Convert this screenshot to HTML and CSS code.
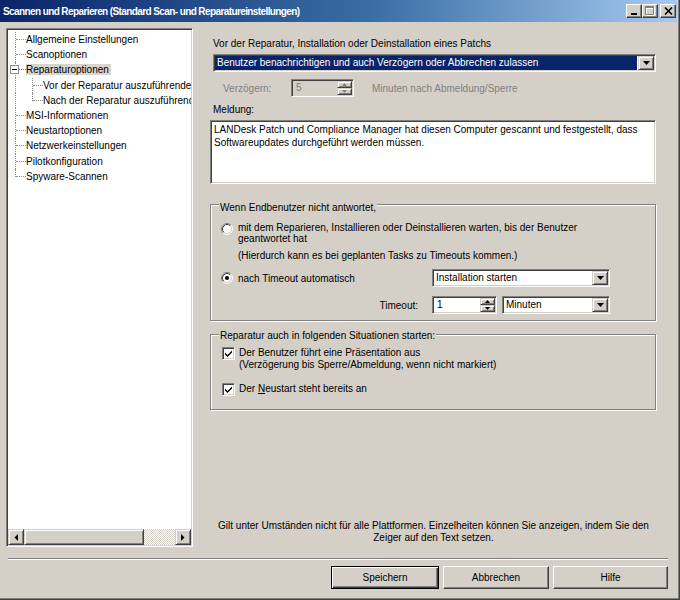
FILE: index.html
```html
<!DOCTYPE html>
<html lang="de">
<head>
    <meta charset="UTF-8">
    <title>Scannen und Reparieren</title>
    <link rel="stylesheet" href="styles.css">
</head>
<body>
    <div class="window">
        <div class="titlebar">
            <span class="title">Scannen und Reparieren (Standard Scan- und Reparatureinstellungen)</span>
            <div class="caption-btns">
                <span class="cap-btn">
                    <svg width="8" height="8" viewBox="0 0 8 8"><rect x="1" y="6" width="6" height="2" fill="#000"/></svg>
                </span>
                <span class="cap-btn">
                    <svg width="10" height="10" viewBox="0 0 10 10">
                        <path d="M1.5 1.5h8v8h-8z M1.5 2.5h8" fill="none" stroke="#fff" stroke-width="1"/>
                        <path d="M0.5 0.5h8v8h-8z M0.5 1.5h8" fill="none" stroke="#808080" stroke-width="1"/>
                    </svg>
                </span>
                <span class="cap-btn close">
                    <svg width="9" height="8" viewBox="0 0 9 8"><path d="M1 0.5l7 7M8 0.5l-7 7" stroke="#000" stroke-width="1.6"/></svg>
                </span>
            </div>
        </div>

        <div class="client">
            <div class="main">
                <div class="tree sunken">
                    <div class="tree-body">
                        <div class="tree-row"><span class="conn"><i class="hline"></i></span><span class="tree-label">Allgemeine Einstellungen</span></div>
                        <div class="tree-row"><span class="conn"><i class="hline"></i></span><span class="tree-label">Scanoptionen</span></div>
                        <div class="tree-row">
                            <span class="conn"><i class="hline"></i><span class="expander"><i class="minus"></i></span></span>
                            <span class="tree-label selected">Reparaturoptionen</span>
                        </div>
                        <div class="tree-row"><span class="indent"></span><span class="conn child"><i class="hline"></i></span><span class="tree-label">Vor der Reparatur auszuführende Befehle</span></div>
                        <div class="tree-row"><span class="indent"></span><span class="conn child last"><i class="hline"></i></span><span class="tree-label">Nach der Reparatur auszuführende Befehle</span></div>
                        <div class="tree-row"><span class="conn"><i class="hline"></i></span><span class="tree-label">MSI-Informationen</span></div>
                        <div class="tree-row"><span class="conn"><i class="hline"></i></span><span class="tree-label">Neustartoptionen</span></div>
                        <div class="tree-row"><span class="conn"><i class="hline"></i></span><span class="tree-label">Netzwerkeinstellungen</span></div>
                        <div class="tree-row"><span class="conn"><i class="hline"></i></span><span class="tree-label">Pilotkonfiguration</span></div>
                        <div class="tree-row"><span class="conn last"><i class="hline"></i></span><span class="tree-label">Spyware-Scannen</span></div>
                    </div>
                    <div class="hscroll">
                        <span class="sb-btn raised"><svg width="4" height="7" viewBox="0 0 4 7"><polygon points="4,0 4,7 0.5,3.5" fill="#000"/></svg></span>
                        <span class="sb-thumb raised"></span>
                        <span class="sb-track"></span>
                        <span class="sb-btn raised"><svg width="4" height="7" viewBox="0 0 4 7"><polygon points="0,0 0,7 3.5,3.5" fill="#000"/></svg></span>
                    </div>
                </div>

                <div class="panel">
                    <div class="field-label">Vor der Reparatur, Installation oder Deinstallation eines Patchs</div>
                    <div class="combo combo-main sunken">
                        <span class="combo-text selected">Benutzer benachrichtigen und auch Verzögern oder Abbrechen zulassen</span>
                        <span class="combo-btn raised"><svg width="7" height="4" viewBox="0 0 7 4"><polygon points="0,0 7,0 3.5,4" fill="#000"/></svg></span>
                    </div>

                    <div class="delay-row">
                        <span class="delay-label">Verzögern:</span>
                        <div class="spin spin-delay sunken disabled">
                            <span class="spin-value">5</span>
                            <span class="spin-btns">
                                <span class="spin-btn raised"><svg width="5" height="3" viewBox="0 0 5 3"><polygon points="0,3 5,3 2.5,0" fill="#808080"/></svg></span>
                                <span class="spin-btn raised"><svg width="5" height="3" viewBox="0 0 5 3"><polygon points="0,0 5,0 2.5,3" fill="#808080"/></svg></span>
                            </span>
                        </div>
                        <span class="delay-unit">Minuten nach Abmeldung/Sperre</span>
                    </div>

                    <div class="field-label label-message">Meldung:</div>
                    <div class="message sunken">LANDesk Patch und Compliance Manager hat diesen Computer gescannt und festgestellt, dass Softwareupdates durchgeführt werden müssen.</div>

                    <div class="group group-timeout">
                        <div class="group-title">Wenn Endbenutzer nicht antwortet,</div>
                        <div class="option">
                            <span class="radio">
                                <svg width="12" height="12" viewBox="0 0 12 12">
                                    <circle cx="6" cy="6" r="5" fill="#fff"/>
                                    <path d="M2.11 9.89A5.5 5.5 0 0 1 9.89 2.11" fill="none" stroke="#808080"/>
                                    <path d="M9.89 2.11A5.5 5.5 0 0 1 2.11 9.89" fill="none" stroke="#fff"/>
                                    <path d="M2.82 9.18A4.5 4.5 0 0 1 9.18 2.82" fill="none" stroke="#404040"/>
                                    <path d="M9.18 2.82A4.5 4.5 0 0 1 2.82 9.18" fill="none" stroke="#d4d0c8"/>
                                </svg>
                            </span>
                            <span class="option-text">mit dem Reparieren, Installieren oder Deinstallieren warten, bis der Benutzer<br>geantwortet hat</span>
                        </div>
                        <div class="hint">(Hierdurch kann es bei geplanten Tasks zu Timeouts kommen.)</div>
                        <div class="option-row">
                            <div class="option-left">
                                <span class="radio">
                                    <svg width="12" height="12" viewBox="0 0 12 12">
                                        <circle cx="6" cy="6" r="5" fill="#fff"/>
                                        <path d="M2.11 9.89A5.5 5.5 0 0 1 9.89 2.11" fill="none" stroke="#808080"/>
                                        <path d="M9.89 2.11A5.5 5.5 0 0 1 2.11 9.89" fill="none" stroke="#fff"/>
                                        <path d="M2.82 9.18A4.5 4.5 0 0 1 9.18 2.82" fill="none" stroke="#404040"/>
                                        <path d="M9.18 2.82A4.5 4.5 0 0 1 2.82 9.18" fill="none" stroke="#d4d0c8"/>
                                        <circle cx="6" cy="6" r="2" fill="#000"/>
                                    </svg>
                                </span>
                                <span class="option-text">nach Timeout automatisch</span>
                            </div>
                            <div class="combo combo-action sunken">
                                <span class="combo-text">Installation starten</span>
                                <span class="combo-btn raised"><svg width="7" height="4" viewBox="0 0 7 4"><polygon points="0,0 7,0 3.5,4" fill="#000"/></svg></span>
                            </div>
                        </div>
                        <div class="option-row timeout-row">
                            <span class="timeout-label">Timeout:</span>
                            <div class="spin spin-timeout sunken">
                                <span class="spin-value">1</span>
                                <span class="spin-btns">
                                    <span class="spin-btn raised"><svg width="5" height="3" viewBox="0 0 5 3"><polygon points="0,3 5,3 2.5,0" fill="#000"/></svg></span>
                                    <span class="spin-btn raised"><svg width="5" height="3" viewBox="0 0 5 3"><polygon points="0,0 5,0 2.5,3" fill="#000"/></svg></span>
                                </span>
                            </div>
                            <div class="combo combo-unit sunken">
                                <span class="combo-text">Minuten</span>
                                <span class="combo-btn raised"><svg width="7" height="4" viewBox="0 0 7 4"><polygon points="0,0 7,0 3.5,4" fill="#000"/></svg></span>
                            </div>
                        </div>
                    </div>

                    <div class="group group-repair">
                        <div class="group-title">Reparatur auch in folgenden Situationen starten:</div>
                        <div class="check-row">
                            <span class="checkbox sunken"><svg width="7" height="7" viewBox="0 0 7 7"><path d="M0 2.5L2.5 5L7 0.5V2.5L2.5 7L0 4.5Z" fill="#000"/></svg></span>
                            <span class="check-text">Der Benutzer führt eine Präsentation aus<br>(Verzögerung bis Sperre/Abmeldung, wenn nicht markiert)</span>
                        </div>
                        <div class="check-row check-restart">
                            <span class="checkbox sunken"><svg width="7" height="7" viewBox="0 0 7 7"><path d="M0 2.5L2.5 5L7 0.5V2.5L2.5 7L0 4.5Z" fill="#000"/></svg></span>
                            <span class="check-text">Der <u>N</u>eustart steht bereits an</span>
                        </div>
                    </div>

                    <div class="note">Gilt unter Umständen nicht für alle Plattformen. Einzelheiten können Sie anzeigen, indem Sie den<br>Zeiger auf den Text setzen.</div>
                </div>
            </div>

            <div class="separator"></div>

            <div class="buttons">
                <button class="btn btn-default btn-save">Speichern</button>
                <button class="btn btn-cancel">Abbrechen</button>
                <button class="btn btn-help">Hilfe</button>
            </div>
        </div>
    </div>
</body>
</html>
```

FILE: styles.css
```css
* {
    box-sizing: border-box;
}

body {
    margin: 0;
    font-family: "Liberation Sans", Arial, sans-serif;
    font-size: 10px;
    color: #000;
    background-color: #d4d0c8;
}

/* classic 3d borders */
.raised {
    background-color: #d4d0c8;
    border: 1px solid;
    border-color: #d4d0c8 #404040 #404040 #d4d0c8;
    box-shadow: inset 1px 1px #fff, inset -1px -1px #808080;
}

.sunken {
    background-color: #fff;
    border: 1px solid;
    border-color: #808080 #fff #fff #808080;
    box-shadow: inset 1px 1px #404040, inset -1px -1px #d4d0c8;
    padding: 1px;
}

.window {
    width: 680px;
    height: 600px;
    display: flex;
    flex-direction: column;
    background-color: #d4d0c8;
    border-right: 1px solid #404040;
    border-bottom: 1px solid #404040;
    box-shadow: inset -1px -1px #808080;
}

.titlebar {
    height: 22px;
    margin-right: 2px;
    padding: 0 1px 0 3px;
    display: flex;
    align-items: center;
    justify-content: space-between;
    background: linear-gradient(to right, #0a246a, #3a6ea5 55%, #a6caf0);
    color: #fff;
}

.title {
    font-weight: bold;
    font-size: 10px;
    letter-spacing: -0.6px;
    white-space: nowrap;
}

.caption-btns {
    display: flex;
}

.cap-btn {
    width: 16px;
    height: 14px;
    display: flex;
    align-items: center;
    justify-content: center;
    background-color: #d4d0c8;
    border: 1px solid;
    border-color: #fff #404040 #404040 #fff;
    box-shadow: inset -1px -1px #808080;
}

.cap-btn.close {
    margin-left: 2px;
}

.client {
    flex: 1;
    display: flex;
    flex-direction: column;
    padding: 6px 11px 0 6px;
}

.main {
    height: 519px;
    display: flex;
}

/* tree */
.tree {
    width: 187px;
    flex-shrink: 0;
    display: flex;
    flex-direction: column;
}

.tree-body {
    flex: 1;
    overflow: hidden;
    padding-top: 2px;
    white-space: nowrap;
}

.tree-row {
    height: 15.2px;
    display: flex;
}

.conn {
    position: relative;
    width: 11px;
    flex-shrink: 0;
    margin-left: 7px;
    border-left: 1px dotted #8c8c8c;
}

.conn.child {
    margin-left: 0;
}

.conn.last {
    height: 8px;
}

.hline {
    display: block;
    margin-top: 7px;
    border-top: 1px dotted #8c8c8c;
}

.indent {
    width: 17px;
    flex-shrink: 0;
    margin-left: 7px;
    border-left: 1px dotted #8c8c8c;
}

.expander {
    position: absolute;
    left: -6px;
    top: 3px;
    width: 9px;
    height: 9px;
    border: 1px solid #8c8c8c;
    background-color: #fff;
    display: flex;
    align-items: center;
    justify-content: center;
}

.minus {
    display: block;
    width: 5px;
    height: 1px;
    background-color: #000;
}

.tree-label {
    align-self: center;
    line-height: 11px;
    padding: 0 2px 0 0;
}

.tree-label.selected {
    background-color: #d8d5cf;
}

.hscroll {
    height: 16px;
    display: flex;
}

.sb-btn {
    width: 16px;
    display: flex;
    align-items: center;
    justify-content: center;
}

.sb-thumb {
    width: 120px;
}

.sb-track {
    flex: 1;
    background-color: #fff;
    background-image: repeating-conic-gradient(#d4d0c8 0 25%, #fff 0 50%);
    background-size: 2px 2px;
}

/* right panel */
.panel {
    flex: 1;
    margin: 0 11px 0 17px;
    display: flex;
    flex-direction: column;
}

.field-label {
    margin: 10px 0 0 3px;
    line-height: 12px;
}

.label-message {
    margin-top: 7px;
}

.combo {
    height: 18px;
    display: flex;
}

.combo-text {
    flex: 1;
    line-height: 14px;
    padding-left: 2px;
    white-space: nowrap;
    overflow: hidden;
}

.combo-text.selected {
    background-color: #0a246a;
    color: #fff;
    margin-right: 1px;
}

.combo-btn {
    width: 16px;
    display: flex;
    align-items: center;
    justify-content: center;
}

.combo-main {
    margin: 4px 1px 0 3px;
}

.delay-row {
    height: 18px;
    margin-top: 7px;
    display: flex;
    align-items: center;
    color: #808080;
}

.delay-label {
    width: 68px;
    margin-left: 13px;
}

.spin {
    height: 18px;
    display: flex;
}

.spin.disabled {
    background-color: #d4d0c8;
}

.spin-value {
    flex: 1;
    line-height: 14px;
    padding-left: 3px;
}

.spin-btns {
    width: 15px;
    display: flex;
    flex-direction: column;
}

.spin-btn {
    flex: 1;
    display: flex;
    align-items: center;
    justify-content: center;
}

.spin-delay {
    width: 63px;
}

.delay-unit {
    margin-left: 18px;
}

.message {
    height: 64px;
    margin: 4px 1px 0 0;
    padding: 2px 3px;
    line-height: 13px;
}

/* group boxes */
.group {
    margin: 20px 1px 0 0;
    padding: 0 10px 6px 10px;
    border: 1px solid #808080;
    box-shadow: inset 1px 1px #fff, 1px 1px #fff;
}

.group-title {
    display: table;
    margin: -3px 0 0 -2px;
    padding: 0 1px;
    line-height: 12px;
    background-color: #d4d0c8;
}

.option {
    display: flex;
    margin-top: 8px;
    line-height: 11px;
}

.radio {
    width: 12px;
    height: 12px;
    flex-shrink: 0;
    margin-right: 5px;
    display: flex;
}

.option .radio {
    margin-top: 1px;
}

.hint {
    margin: 6px 0 0 17px;
    line-height: 11px;
}

.option-row {
    height: 18px;
    margin-top: 8px;
    display: flex;
    align-items: center;
}

.option-left {
    width: 211px;
    display: flex;
    align-items: center;
}

.combo-action {
    width: 178px;
}

.timeout-row {
    margin-top: 9px;
}

.timeout-label {
    width: 197px;
    margin-right: 14px;
    text-align: right;
}

.spin-timeout {
    width: 65px;
    margin-right: 5px;
}

.combo-unit {
    width: 108px;
}

.group-repair {
    margin-top: 13px;
    padding-bottom: 13px;
}

.group-repair .group-title {
    margin-top: -5px;
}

.check-row {
    display: flex;
    margin-top: 5px;
    line-height: 12px;
}

.check-restart {
    margin-top: 12px;
}

.checkbox {
    width: 13px;
    height: 13px;
    flex-shrink: 0;
    margin: 0 4px 0 1px;
    display: flex;
    align-items: center;
    justify-content: center;
}

.note {
    margin: auto -6px 3px -6px;
    text-align: center;
    line-height: 12px;
    white-space: nowrap;
}

/* footer */
.separator {
    height: 2px;
    margin: 11px 0 0 2px;
    border-top: 1px solid #808080;
    border-bottom: 1px solid #fff;
}

.buttons {
    margin-top: 6px;
    display: flex;
    justify-content: flex-end;
    gap: 4px;
}

.btn {
    height: 23px;
    padding: 0;
    font-family: "Liberation Sans", Arial, sans-serif;
    font-size: 10px;
    color: #000;
    background-color: #d4d0c8;
    border: 1px solid;
    border-color: #fff #404040 #404040 #fff;
    box-shadow: inset -1px -1px #808080;
}

.btn-default {
    border-color: #000;
    box-shadow: inset 1px 1px #fff, inset -1px -1px #404040, inset -2px -2px #808080;
}

.btn-save {
    width: 108px;
}

.btn-cancel {
    width: 106px;
}

.btn-help {
    width: 115px;
}
```
